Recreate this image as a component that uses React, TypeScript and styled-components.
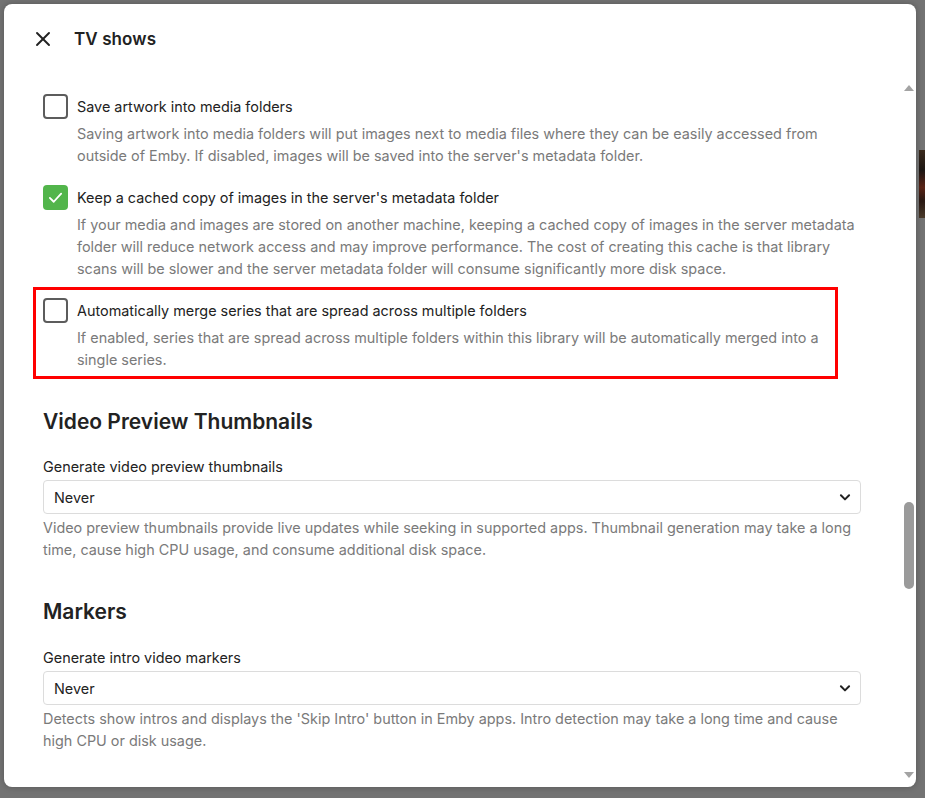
import React from "react";
import styled, { createGlobalStyle } from "styled-components";

const Global = createGlobalStyle`
  html, body { margin: 0; padding: 0; }
  body {
    background: #737373;
    font-family: Inter, "Noto Sans", sans-serif;
    overflow: hidden;
  }
`;

const Page = styled.div`
  position: relative;
  width: 925px;
  height: 798px;
  padding: 4px 9px 11px 4px;
  box-sizing: border-box;
`;

const BackdropPeek = styled.div`
  position: absolute;
  right: 0;
  top: 150px;
  width: 6px;
  height: 68px;
  background: linear-gradient(180deg, #3a2a1c 0%, #1d1714 30%, #5a2416 55%, #2a1a14 75%, #4a3a2a 100%);
`;

const Dialog = styled.div`
  position: relative;
  height: 100%;
  background: #ffffff;
  border-radius: 8px;
  display: flex;
  flex-direction: column;
  overflow: hidden;
  box-shadow: 0 0 6px rgba(0, 0, 0, 0.25);
`;

const Header = styled.div`
  height: 70px;
  flex: none;
  display: flex;
  align-items: center;
  padding-left: 26px;
  gap: 19px;
`;

const CloseButton = styled.button`
  width: 25px;
  height: 25px;
  padding: 0;
  border: none;
  background: none;
  display: flex;
  align-items: center;
  justify-content: center;
  color: #222;
`;

const Title = styled.h1`
  margin: 0;
  font-size: 17px;
  font-weight: 600;
  color: #222;
  letter-spacing: 0.1px;
`;

const Content = styled.div`
  flex: 1;
  overflow: hidden;
  padding: 20px 55px 0 39px;
`;

const CheckItem = styled.div<{ $highlight?: boolean }>`
  position: relative;
  margin-bottom: 18px;
  ${(p) =>
    p.$highlight &&
    `
    &::after {
      content: "";
      position: absolute;
      left: -10px;
      top: -11px;
      width: 805px;
      bottom: -8px;
      border: 3px solid #ff0000;
      box-sizing: border-box;
      pointer-events: none;
    }
  `}
`;

const CheckRow = styled.div`
  display: flex;
  align-items: center;
  gap: 9px;
`;

const Box = styled.span<{ $checked?: boolean }>`
  width: 25px;
  height: 25px;
  box-sizing: border-box;
  border-radius: 4px;
  border: ${(p) => (p.$checked ? "none" : "2px solid #5c5c5c")};
  background: ${(p) => (p.$checked ? "#52b54b" : "#fff")};
  display: flex;
  align-items: center;
  justify-content: center;
  flex: none;
`;

const CheckLabel = styled.span`
  font-size: 14.4px;
  line-height: 25px;
  color: #222;
`;

const Description = styled.div`
  margin-top: 4px;
  padding-left: 34px;
  font-size: 14.4px;
  line-height: 22px;
  color: #7a7a7a;
`;

const SectionTitle = styled.h2`
  margin: 37px 0 21px;
  font-size: 21px;
  line-height: 28px;
  font-weight: 600;
  color: #222;
`;

const FieldLabel = styled.div`
  font-size: 14.4px;
  line-height: 20px;
  color: #222;
  margin-bottom: 3px;
`;

const Select = styled.div`
  height: 34px;
  box-sizing: border-box;
  border: 1px solid #dcdcdc;
  border-radius: 4px;
  display: flex;
  align-items: center;
  justify-content: space-between;
  padding: 0 8px 0 10px;
  font-size: 14.4px;
  color: #222;
`;

const Help = styled.div`
  margin-top: 3px;
  font-size: 14.4px;
  line-height: 22px;
  color: #7a7a7a;
`;

const Section = styled.section`
  & + & h2 {
    margin-top: 37px;
    margin-bottom: 22px;
  }
`;

const Scrollbar = styled.div`
  position: absolute;
  right: 0;
  top: 76px;
  bottom: 4px;
  width: 15px;
`;

const Arrow = styled.div<{ $down?: boolean }>`
  position: absolute;
  left: 3px;
  ${(p) => (p.$down ? "bottom: 5px;" : "top: 5px;")}
  width: 0;
  height: 0;
  border-left: 5px solid transparent;
  border-right: 5px solid transparent;
  ${(p) => (p.$down ? "border-top: 6px solid #a3a3a3;" : "border-bottom: 6px solid #a3a3a3;")}
`;

const Thumb = styled.div`
  position: absolute;
  left: 3px;
  top: 422px;
  width: 10px;
  height: 87px;
  border-radius: 5px;
  background: #9a9a9a;
`;

const Check = () => (
  <svg width="17" height="17" viewBox="0 0 24 24" fill="none" stroke="#fff" strokeWidth="2.6" strokeLinecap="round" strokeLinejoin="round">
    <polyline points="4 12.5 9.5 18 20 6.5" />
  </svg>
);

const Chevron = () => (
  <svg width="14" height="14" viewBox="0 0 24 24" fill="none" stroke="#222" strokeWidth="3.4" strokeLinecap="round" strokeLinejoin="round">
    <polyline points="5 9 12 16 19 9" />
  </svg>
);

const CloseIcon = () => (
  <svg width="16" height="16" viewBox="0 0 16 16" fill="none" stroke="#222" strokeWidth="1.9" strokeLinecap="round">
    <line x1="2" y1="2" x2="14" y2="14" />
    <line x1="14" y1="2" x2="2" y2="14" />
  </svg>
);

export default function App() {
  return (
    <>
      <Global />
      <Page>
        <BackdropPeek />
        <Dialog>
          <Header>
            <CloseButton aria-label="Close">
              <CloseIcon />
            </CloseButton>
            <Title>TV shows</Title>
          </Header>
          <Content>
            <CheckItem>
              <CheckRow>
                <Box />
                <CheckLabel>Save artwork into media folders</CheckLabel>
              </CheckRow>
              <Description>
                Saving artwork into media folders will put images next to media files where they can be easily accessed from outside of Emby. If disabled, images will be saved into the server's metadata folder.
              </Description>
            </CheckItem>
            <CheckItem>
              <CheckRow>
                <Box $checked>
                  <Check />
                </Box>
                <CheckLabel>Keep a cached copy of images in the server's metadata folder</CheckLabel>
              </CheckRow>
              <Description>
                If your media and images are stored on another machine, keeping a cached copy of images in the server metadata folder will reduce network access and may improve performance. The cost of creating this cache is that library scans will be slower and the server metadata folder will consume significantly more disk space.
              </Description>
            </CheckItem>
            <CheckItem $highlight>
              <CheckRow>
                <Box />
                <CheckLabel>Automatically merge series that are spread across multiple folders</CheckLabel>
              </CheckRow>
              <Description>
                If enabled, series that are spread across multiple folders within this library will be automatically merged into a single series.
              </Description>
            </CheckItem>

            <Section>
              <SectionTitle>Video Preview Thumbnails</SectionTitle>
              <FieldLabel>Generate video preview thumbnails</FieldLabel>
              <Select>
                <span>Never</span>
                <Chevron />
              </Select>
              <Help>
                Video preview thumbnails provide live updates while seeking in supported apps. Thumbnail generation may take a long time, cause high CPU usage, and consume additional disk space.
              </Help>
            </Section>

            <Section>
              <SectionTitle>Markers</SectionTitle>
              <FieldLabel>Generate intro video markers</FieldLabel>
              <Select>
                <span>Never</span>
                <Chevron />
              </Select>
              <Help>
                Detects show intros and displays the 'Skip Intro' button in Emby apps. Intro detection may take a long time and cause high CPU or disk usage.
              </Help>
            </Section>
          </Content>
          <Scrollbar>
            <Arrow />
            <Thumb />
            <Arrow $down />
          </Scrollbar>
        </Dialog>
      </Page>
    </>
  );
}
